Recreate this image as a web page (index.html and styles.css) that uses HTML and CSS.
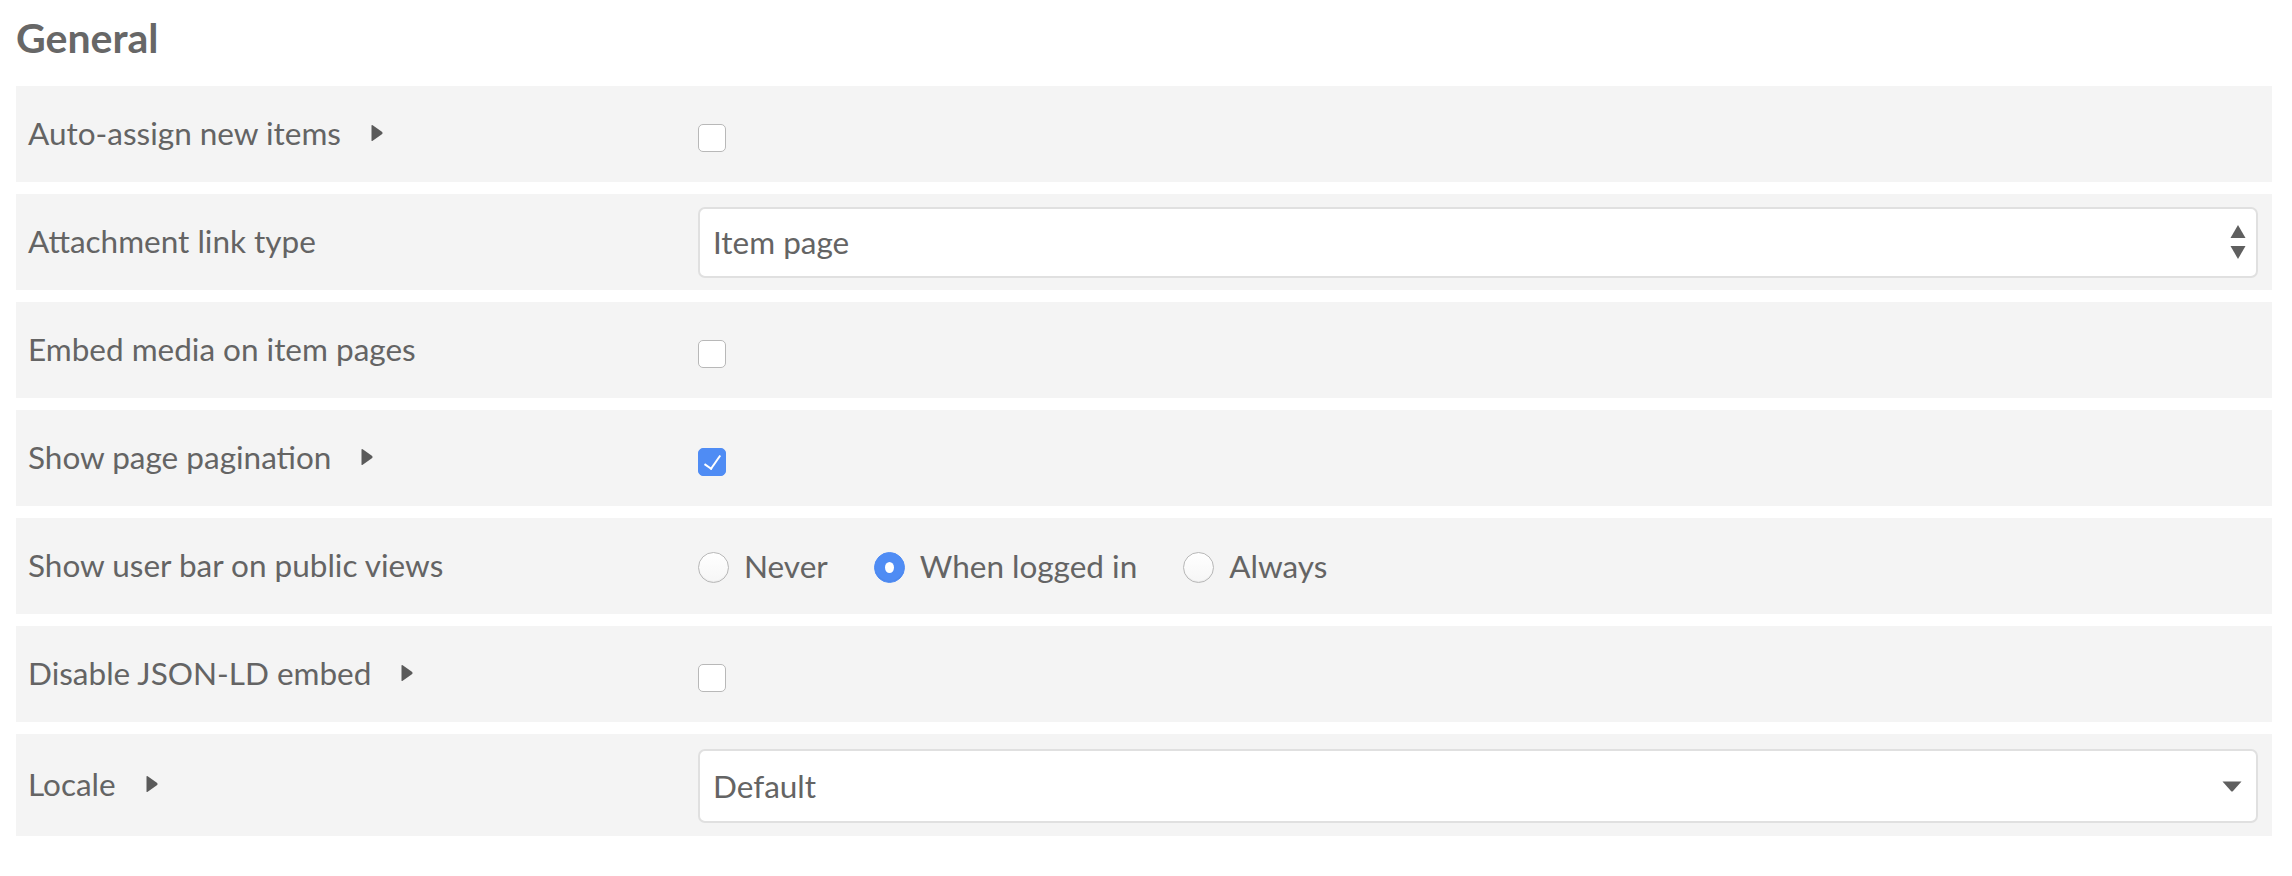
FILE: index.html
```html
<!DOCTYPE html>
<html lang="en">
<head>
<meta charset="utf-8">
<title>General settings</title>
<link rel="stylesheet" href="styles.css">
</head>
<body>
<h2 class="section-title">General</h2>
<div class="settings">
  <div class="row">
    <div class="label"><span>Auto-assign new items</span><svg class="caret" viewBox="0 0 12 18" width="12" height="18"><path d="M0.5 1.8 Q0.5 0.4 1.7 1.2 L11.2 8 Q12 9 11.2 10 L1.7 16.8 Q0.5 17.6 0.5 16.2 Z"/></svg></div>
    <div class="control"><input type="checkbox" class="check"></div>
  </div>
  <div class="row">
    <div class="label"><span>Attachment link type</span></div>
    <div class="control">
      <div class="select-wrap">
        <select class="select"><option>Item page</option></select>
        <svg class="updown" viewBox="0 0 16 34" width="16" height="34"><path d="M8 0 L15.5 13 L0.5 13 Z"/><path d="M0.5 21 L15.5 21 L8 34 Z"/></svg>
      </div>
    </div>
  </div>
  <div class="row">
    <div class="label"><span>Embed media on item pages</span></div>
    <div class="control"><input type="checkbox" class="check"></div>
  </div>
  <div class="row">
    <div class="label"><span>Show page pagination</span><svg class="caret" viewBox="0 0 12 18" width="12" height="18"><path d="M0.5 1.8 Q0.5 0.4 1.7 1.2 L11.2 8 Q12 9 11.2 10 L1.7 16.8 Q0.5 17.6 0.5 16.2 Z"/></svg></div>
    <div class="control"><input type="checkbox" class="check" checked></div>
  </div>
  <div class="row">
    <div class="label"><span>Show user bar on public views</span></div>
    <div class="control">
      <div class="radios">
        <label class="radio-item"><input type="radio" name="userbar" class="radio"><span>Never</span></label>
        <label class="radio-item"><input type="radio" name="userbar" class="radio" checked><span>When logged in</span></label>
        <label class="radio-item"><input type="radio" name="userbar" class="radio"><span>Always</span></label>
      </div>
    </div>
  </div>
  <div class="row">
    <div class="label"><span>Disable JSON-LD embed</span><svg class="caret" viewBox="0 0 12 18" width="12" height="18"><path d="M0.5 1.8 Q0.5 0.4 1.7 1.2 L11.2 8 Q12 9 11.2 10 L1.7 16.8 Q0.5 17.6 0.5 16.2 Z"/></svg></div>
    <div class="control"><input type="checkbox" class="check"></div>
  </div>
  <div class="row row-tall">
    <div class="label"><span>Locale</span><svg class="caret" viewBox="0 0 12 18" width="12" height="18"><path d="M0.5 1.8 Q0.5 0.4 1.7 1.2 L11.2 8 Q12 9 11.2 10 L1.7 16.8 Q0.5 17.6 0.5 16.2 Z"/></svg></div>
    <div class="control">
      <div class="select-wrap select-wrap-tall">
        <select class="select"><option>Default</option></select>
        <svg class="down" viewBox="0 0 20 11" width="20" height="11"><path d="M0.5 0.5 L19.5 0.5 L10.8 10.2 Q10 11 9.2 10.2 Z"/></svg>
      </div>
    </div>
  </div>
</div>
</body>
</html>
```

FILE: styles.css
```css
html, body {
  margin: 0;
  background: #ffffff;
}
body {
  padding: 0 20px 0 16px;
  font-family: Lato, "Open Sans", "Liberation Sans", sans-serif;
  color: #666666;
}
.section-title {
  margin: 14px 0 24px 0;
  font-size: 41px;
  line-height: 48px;
  font-weight: 700;
  color: #676767;
}
.settings {
  display: flex;
  flex-direction: column;
  gap: 12px;
}
.row {
  display: flex;
  align-items: center;
  height: 96px;
  background: #f4f4f4;
}
.row-tall {
  height: 102px;
}
.label {
  box-sizing: border-box;
  width: 682px;
  flex: none;
  padding-left: 12px;
  padding-bottom: 2px;
  display: flex;
  align-items: center;
  gap: 30px;
  font-size: 31.5px;
  line-height: 40px;
  color: #646464;
}
.caret {
  fill: #5a5a5a;
  flex: none;
}
.control {
  flex: 1;
  padding-right: 14px;
  display: flex;
  align-items: center;
  min-width: 0;
}
.check {
  appearance: none;
  -webkit-appearance: none;
  margin: 8px 0 0 0;
  width: 28px;
  height: 28px;
  box-sizing: border-box;
  border: 1.5px solid #b8b8b8;
  border-radius: 5px;
  background: #ffffff;
  display: grid;
  place-items: center;
}
.check:checked {
  background: #4f8cf4;
  border-color: #4f8cf4;
}
.check:checked::after {
  content: "";
  width: 7px;
  height: 15px;
  border: solid #ffffff;
  border-width: 0 2.5px 2.5px 0;
  transform: translate(0, -2px) rotate(35deg);
}
.select-wrap {
  position: relative;
  flex: 1;
  height: 71px;
}
.select-wrap-tall {
  height: 74px;
  margin-top: 2px;
}
.select {
  appearance: none;
  -webkit-appearance: none;
  width: 100%;
  height: 100%;
  box-sizing: border-box;
  border: 2px solid #e0e0e0;
  border-radius: 7px;
  background: #ffffff;
  padding: 0 60px 0 13px;
  font-family: Lato, "Open Sans", "Liberation Sans", sans-serif;
  font-size: 31.5px;
  color: #646464;
  outline: none;
}
.updown {
  position: absolute;
  right: 12px;
  top: 18px;
  fill: #5f5f5f;
  pointer-events: none;
}
.down {
  position: absolute;
  right: 16px;
  top: 32px;
  fill: #5f5f5f;
  pointer-events: none;
}
.radios {
  display: flex;
  align-items: center;
  gap: 46px;
  font-size: 31.5px;
  line-height: 40px;
}
.radio-item {
  display: flex;
  align-items: center;
  gap: 15px;
  color: #646464;
}
.radio {
  appearance: none;
  -webkit-appearance: none;
  margin: 2px 0 0 0;
  width: 31px;
  height: 31px;
  box-sizing: border-box;
  border: 1.5px solid #b8b8b8;
  border-radius: 50%;
  background: linear-gradient(#ffffff, #f6f6f6);
  box-shadow: inset 0 -1px 1px rgba(0,0,0,0.05);
  display: grid;
  place-items: center;
}
.radio:checked {
  background: #4f8cf4;
  border-color: #4f8cf4;
}
.radio:checked::after {
  content: "";
  width: 9px;
  height: 11px;
  border-radius: 50%;
  background: #ffffff;
}
```
